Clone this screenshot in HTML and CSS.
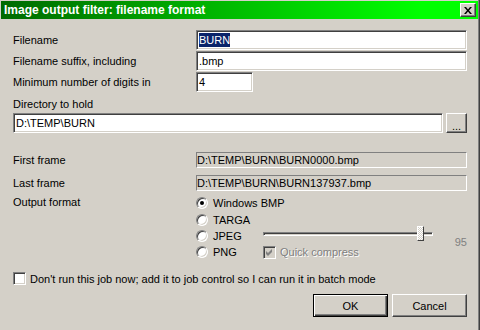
FILE: index.html
```html
<!DOCTYPE html>
<html lang="en">
<head>
  <meta charset="UTF-8"/>
  <title>Image output filter: filename format</title>
  <link rel="stylesheet" href="styles.css">
</head>
<body>
<div class="window">
  <div class="titlebar">
    <span class="title">Image output filter: filename format</span>
    <button class="close"><svg width="8" height="7" viewBox="0 0 8 7"><path d="M0 0h2l2 2.4L6 0h2L5 3.5 8 7H6L4 4.6 2 7H0l3-3.5z" fill="#000"/></svg></button>
  </div>

  <div class="content">
    <div class="row"><span class="lbl">Filename</span><div class="field wide"><span class="sel">BURN</span></div></div>
    <div class="row"><span class="lbl">Filename suffix, including</span><div class="field wide">.bmp</div></div>
    <div class="row"><span class="lbl">Minimum number of digits in</span><div class="field short">4</div></div>

    <div class="dir-label">Directory to hold</div>
    <div class="dir-row">
      <div class="field dir">D:\TEMP\BURN</div>
      <button class="btn browse">...</button>
    </div>

    <div class="row ro first"><span class="lbl">First frame</span><div class="readonly">D:\TEMP\BURN\BURN0000.bmp</div></div>
    <div class="row ro"><span class="lbl">Last frame</span><div class="readonly">D:\TEMP\BURN\BURN137937.bmp</div></div>

    <div class="format">
      <span class="lbl fmt-lbl">Output format</span>
      <div class="options">
        <label class="opt r1"><span class="radio on"></span>Windows BMP</label>
        <label class="opt r2"><span class="radio"></span>TARGA</label>
        <label class="opt r3"><span class="radio"></span>JPEG</label>
        <label class="opt r4"><span class="radio"></span>PNG</label>
        <div class="slider"><div class="track"></div><div class="thumb"></div></div>
        <span class="quality">95</span>
        <label class="quick"><span class="check disabled"><svg width="7" height="7" viewBox="0 0 7 7"><path d="M0 2l2 2 4-4v3L2 7 0 5z" fill="#808080"/></svg></span>Quick compress</label>
      </div>
    </div>

    <label class="batch"><span class="check"></span>Don't run this job now; add it to job control so I can run it in batch mode</label>

    <div class="buttons">
      <button class="btn default">OK</button>
      <button class="btn">Cancel</button>
    </div>
  </div>
</div>
</body>
</html>
```

FILE: styles.css
```css
*{box-sizing:border-box}
html,body{margin:0;background:#d4d0c8}
body{font:11px "Liberation Sans",Arial,sans-serif;color:#000}

.window{width:480px;height:330px;padding:1px 0 0 1px;border-right:1px solid #404040;box-shadow:inset -1px 0 #808080;overflow:hidden}

/* title bar */
.titlebar{height:18px;margin-right:1px;padding:0 2px 0 3px;display:flex;align-items:center;justify-content:space-between;background:linear-gradient(90deg,#006a00,#00ff00 88%)}
.title{color:#fff;font-weight:bold;font-size:12px;white-space:nowrap}
.close{width:16px;height:14px;padding:0;margin:0;display:flex;align-items:center;justify-content:center;background:#d4d0c8;border:1px solid;border-color:#fff #404040 #404040 #fff;box-shadow:inset -1px -1px #808080}

/* form */
.content{padding:11px 12px 0}
.row{display:flex;align-items:center;height:20px;margin-bottom:1px}
.lbl{width:183px;flex:none;white-space:nowrap}
.field{height:20px;background:#fff;border:1px solid;border-color:#808080 #fff #fff #808080;box-shadow:inset 1px 1px #404040,inset -1px -1px #d4d0c8;padding:0 3px 0 2px;display:flex;align-items:center;white-space:nowrap}
.field.wide{flex:1}
.field.short{width:57px}
.sel{background:#0a246a;color:#fff;line-height:14px}

.dir-label{margin-top:6px;line-height:13px}
.dir-row{display:flex;gap:3px;margin-top:2px}
.field.dir{flex:1}
.browse{width:21px;height:20px;padding:0 0 3px;display:flex;align-items:flex-end;justify-content:center}

.row.ro{height:16px;margin-top:7px}
.row.ro.first{margin-top:19px}
.readonly{flex:1;height:16px;border:1px solid;border-color:#808080 #fff #fff #808080;display:flex;align-items:center;white-space:nowrap}

/* output format */
.format{display:flex;margin-top:3px}
.fmt-lbl{line-height:17px}
.options{flex:1;display:grid;grid-template-columns:67px 190px 1fr;grid-template-rows:17px 17px 16px 16px}
.opt{grid-column:1;display:flex;align-items:center;white-space:nowrap}
.r1{grid-row:1}.r2{grid-row:2}.r3{grid-row:3}.r4{grid-row:4}
.radio{width:12px;height:12px;flex:none;margin-right:5px;border-radius:50%;background:#fff;border:1px solid;border-color:#808080 #fff #fff #808080;box-shadow:inset 1px 1px #404040,inset -1px -1px #d4d0c8;display:flex;align-items:center;justify-content:center}
.radio.on::after{content:"";width:4px;height:4px;border-radius:50%;background:#000}

.slider{grid-column:2;grid-row:3;position:relative;padding-top:4px}
.track{width:170px;height:4px;border:1px solid;border-color:#808080 #fff #fff #808080;box-shadow:inset 1px 1px #404040}
.thumb{position:absolute;left:154px;top:-2px;width:7px;height:15px;border:1px solid;border-color:#fff #404040 #404040 #fff;background:repeating-conic-gradient(#fff 0 25%,#d4d0c8 0 50%) 0 0/2px 2px}
.quality{grid-column:3;grid-row:3/5;justify-self:end;align-self:center;margin-bottom:4px;color:#808080}
.quick{grid-column:2;grid-row:4;display:flex;align-items:center;gap:4px;color:#808080;text-shadow:1px 1px #fff;white-space:nowrap}

.check{width:13px;height:13px;flex:none;background:#fff;border:1px solid;border-color:#808080 #fff #fff #808080;box-shadow:inset 1px 1px #404040,inset -1px -1px #d4d0c8;display:flex;align-items:center;justify-content:center}
.check.disabled{background:#d4d0c8}

.batch{display:flex;align-items:center;gap:4px;height:13px;margin-top:12px;white-space:nowrap}

/* buttons */
.buttons{display:flex;justify-content:flex-end;gap:4px;margin-top:9px}
.btn{font:inherit;color:#000;background:#d4d0c8;border:1px solid;border-color:#fff #404040 #404040 #fff;box-shadow:inset -1px -1px #808080;padding:0;margin:0}
.buttons .btn{width:75px;height:23px}
.btn.default{border-color:#000;box-shadow:inset 1px 1px #fff,inset -1px -1px #404040,inset -2px -2px #808080}
```
